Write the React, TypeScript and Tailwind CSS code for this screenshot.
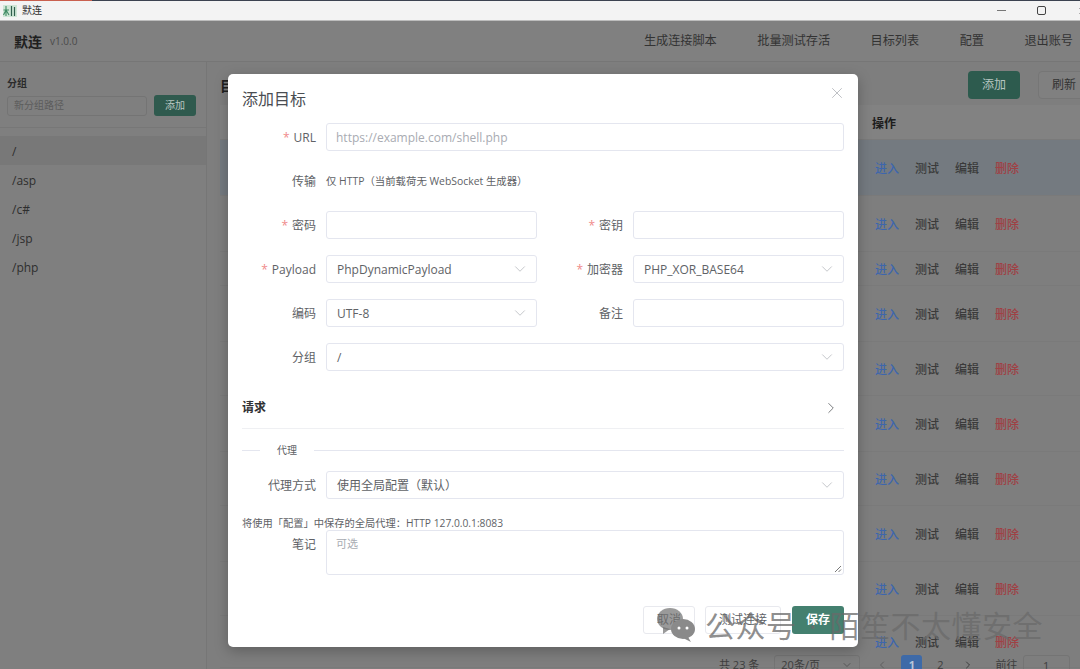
import { ChevronDown, ChevronLeft, ChevronRight, X } from 'lucide-react';
import type { ReactNode } from 'react';

const FONT = "font-['Open_Sans','Noto_Sans_CJK_SC',sans-serif]";

const GROUPS = ['/', '/asp', '/c#', '/jsp', '/php'];
const NAV = ['生成连接脚本', '批量测试存活', '目标列表', '配置', '退出账号'];
const ROW_HEIGHTS = ['h-[56px]', 'h-[56px]', 'h-[34px]', 'h-[56px]', 'h-[54px]', 'h-[56px]', 'h-[54px]', 'h-[56px]', 'h-[54px]', 'h-[52px]'];

function TitleBar() {
  return (
    <div className="shrink-0 h-[21px] bg-[#f3f3f3] border-b border-[#bdbdbd]">
      <div className="flex h-[1px]">
        <div className="w-[92px] bg-[#c9604f]" />
        <div className="flex-1 bg-[#3b4250]" />
      </div>
      <div className="flex items-center h-[19px] pl-[3px]">
        <svg width="14" height="12" viewBox="0 0 14 12">
          <rect width="14" height="12" fill="#cfe6d6" />
          <path d="M0.5 5 H6 M3 1 V11 M3 5 L0.5 10 M3 5 L6 10" stroke="#3f8a63" strokeWidth="1.1" fill="none" />
          <path d="M8.5 1 V11 M11.5 2 V11" stroke="#2f5f4d" strokeWidth="1.2" fill="none" />
        </svg>
        <span className="ml-[5px] text-[10px] text-[#333]">默连</span>
        <div className="flex-1" />
        <div className="w-[9px] h-[1px] bg-[#777]" />
        <div className="ml-[31px] w-[9px] h-[9px] border border-[#444] rounded-[2px]" />
        <X size={10} strokeWidth={1.2} className="ml-[31px] mr-[-7px] text-[#444]" />
      </div>
    </div>
  );
}

function Header() {
  return (
    <div className="shrink-0 h-[41px] flex items-center pl-[14px] pr-[7px] bg-[#808080] border-b border-[#767676]">
      <span className="text-[14px] font-bold text-[#1f1f1f]">默连</span>
      <span className="ml-[8px] text-[10px] text-[#4a4a4a]">v1.0.0</span>
      <div className="flex-1" />
      <nav className="flex gap-[40.5px] text-[12.15px] text-[#333]">
        {NAV.map((n) => (
          <span key={n}>{n}</span>
        ))}
      </nav>
    </div>
  );
}

function Sidebar() {
  return (
    <aside className="shrink-0 w-[207px] bg-[#7f7f7f] border-r border-[#767676]">
      <div className="h-[66px] px-[7px] pt-[14px] border-b border-[#777]">
        <div className="text-[10px] font-bold leading-[14px] text-[#2b2b2b]">分组</div>
        <div className="flex items-center gap-[7px] mt-[5px]">
          <div className="flex items-center w-[140px] h-[20px] px-[6px] border border-[#747474] rounded-[3px] text-[10px] text-[#5c5c5c]">
            新分组路径
          </div>
          <div className="flex items-center justify-center w-[42px] h-[21px] rounded-[3px] bg-[#2f5a4e] text-[10px] text-[#b9c7c2]">
            添加
          </div>
        </div>
      </div>
      <div className="pt-[8px]">
        {GROUPS.map((g, i) => (
          <div
            key={g}
            className={`flex items-center h-[29px] pl-[12px] pt-[2px] text-[12px] text-[#2e2e2e] ${i === 0 ? 'bg-[#787878]' : ''}`}
          >
            {g}
          </div>
        ))}
      </div>
    </aside>
  );
}

function Table() {
  return (
    <div className="flex-1 min-w-0 flex flex-col overflow-hidden pl-[13px] bg-[#7e7e7e]">
      <div className="shrink-0 h-[43px] flex items-center pt-[3px]">
        <span className="text-[14px] font-bold text-[#1f1f1f]">目标列表</span>
        <div className="flex-1" />
        <div className="flex items-center justify-center w-[52px] h-[28px] rounded-[4px] bg-[#2d5b4e] text-[12px] text-[#b6c6c1]">
          添加
        </div>
        <div className="flex items-center justify-center w-[52px] h-[28px] ml-[18px] mr-[-10px] rounded-[4px] border border-[#767676] bg-[#808080] text-[12px] text-[#333]">
          刷新
        </div>
      </div>
      <div className="shrink-0 h-[35px] flex items-center pl-[652px] pt-[3px] bg-[#828282] border-b border-[#7a7a7a]">
        <span className="text-[12px] font-bold text-[#1d1d1d]">操作</span>
      </div>
      {ROW_HEIGHTS.map((h, i) => (
        <div
          key={i}
          className={`shrink-0 ${h} flex items-center pl-[655px] pt-[2px] gap-[16px] text-[12px] font-medium border-b border-[#7a7a7a] ${i === 0 ? 'bg-[#747a80]' : ''}`}
        >
          <span className="text-[#3d66ad]">进入</span>
          <span className="text-[#3a3a3a]">测试</span>
          <span className="text-[#3a3a3a]">编辑</span>
          <span className="text-[#a04044]">删除</span>
        </div>
      ))}
    </div>
  );
}

function Pagination() {
  return (
    <div className="absolute left-[719px] top-[655px] flex items-start text-[11px] text-[#3d3d3d]">
      <span className="leading-[20px]">共 23 条</span>
      <div className="ml-[15px] flex items-center justify-between w-[86px] h-[20px] px-[6px] border border-[#747474] rounded-[3px]">
        <span>20条/页</span>
        <ChevronDown size={12} strokeWidth={1.2} />
      </div>
      <ChevronLeft size={12} className="ml-[16px] mt-[4px] text-[#5f5f5f]" />
      <div className="ml-[13px] flex justify-center w-[21px] h-[20px] leading-[20px] rounded-[3px] bg-[#3e6aa8] text-[#b8c6da] font-bold">
        1
      </div>
      <span className="ml-[15px] leading-[20px]">2</span>
      <ChevronRight size={12} className="ml-[18px] mt-[4px]" />
      <span className="ml-[22px] leading-[20px]">前往</span>
      <div className="ml-[5px] flex justify-center w-[47px] h-[20px] leading-[20px] border border-[#747474] rounded-[3px]">
        1
      </div>
    </div>
  );
}

function Field({ label, required, children, width = 'w-[74px]' }: { label: string; required?: boolean; children: ReactNode; width?: string }) {
  return (
    <div className="flex items-center min-w-0">
      <label className={`shrink-0 ${width} pt-[2px] text-right text-[12px] text-[#606266]`}>
        {required && <span className="mr-[4px] text-[#f08a8a]">*</span>}
        {label}
      </label>
      <div className="flex-1 min-w-0 ml-[10px]">{children}</div>
    </div>
  );
}

function Input({ placeholder }: { placeholder?: string }) {
  return (
    <div className="flex items-center h-[28px] px-[9px] pt-[1px] bg-white border border-[#e4e6ef] rounded-[3px] text-[12px] text-[#a8abb2]">
      {placeholder}
    </div>
  );
}

function Select({ value }: { value: string }) {
  return (
    <div className="flex items-center justify-between h-[28px] pl-[10px] pr-[7px] bg-white border border-[#e4e6ef] rounded-[3px] text-[12px] text-[#606266]">
      <span className="pt-[1px]">{value}</span>
      <ChevronDown size={18} strokeWidth={0.9} className="text-[#a8abb2]" />
    </div>
  );
}

function Button({ children, primary, className }: { children: ReactNode; primary?: boolean; className: string }) {
  return (
    <div
      className={`flex items-center justify-center h-[28px] rounded-[3px] text-[12px] ${className} ${
        primary ? 'bg-[#44806f] text-white font-bold' : 'bg-white border border-[#e8e9ee] text-[#606266]'
      }`}
    >
      {children}
    </div>
  );
}

function Dialog() {
  return (
    <div className="absolute left-[228px] top-[74px] w-[630px] h-[573px] px-[14px] bg-white rounded-[5px] shadow-[0_4px_14px_rgba(0,0,0,0.25)]">
      <div className="relative h-[49px] pt-[14px] text-[16px] leading-[22px] text-[#4a4d52]">
        添加目标
        <X size={18} strokeWidth={0.9} className="absolute right-[-2px] top-[10px] text-[#a0a3a8]" />
      </div>
      <div className="flex flex-col gap-[16px]">
        <Field label="URL" required>
          <Input placeholder="https://example.com/shell.php" />
        </Field>
        <div className="flex items-center h-[28px] pt-[2px]">
          <label className="w-[74px] text-right text-[12px] text-[#606266]">传输</label>
          <span className="ml-[10px] text-[10.4px] text-[#606266]">仅 HTTP（当前载荷无 WebSocket 生成器）</span>
        </div>
        <div className="grid grid-cols-[295px_307px]">
          <Field label="密码" required>
            <Input />
          </Field>
          <Field label="密钥" required width="w-[86px]">
            <Input />
          </Field>
        </div>
        <div className="grid grid-cols-[295px_307px]">
          <Field label="Payload" required>
            <Select value="PhpDynamicPayload" />
          </Field>
          <Field label="加密器" required width="w-[86px]">
            <Select value="PHP_XOR_BASE64" />
          </Field>
        </div>
        <div className="grid grid-cols-[295px_307px]">
          <Field label="编码">
            <Select value="UTF-8" />
          </Field>
          <Field label="备注" width="w-[86px]">
            <Input />
          </Field>
        </div>
        <Field label="分组">
          <Select value="/" />
        </Field>
      </div>

      <div className="flex items-center justify-between h-[58px] pt-[16px] border-b border-[#eff0f3] text-[12px] font-bold text-[#303133]">
        <span>请求</span>
        <ChevronRight size={18} strokeWidth={1.1} className="mr-[4px] text-[#606266]" />
      </div>

      <div className="flex items-center h-[42px] text-[10px] text-[#606266]">
        <div className="w-[18px] h-[1px] bg-[#e4e6ef]" />
        <span className="px-[17px]">代理</span>
        <div className="flex-1 h-[1px] bg-[#e4e6ef]" />
      </div>

      <Field label="代理方式">
        <Select value="使用全局配置（默认）" />
      </Field>
      <div className="mt-[17px] text-[10.25px] leading-[14px] text-[#606266]">将使用「配置」中保存的全局代理：HTTP 127.0.0.1:8083</div>

      <div className="flex items-start">
        <label className="shrink-0 w-[74px] pt-[7px] text-right text-[12px] leading-[16px] text-[#606266]">笔记</label>
        <div className="relative flex-1 h-[45px] ml-[10px] px-[9px] pt-[5px] border border-[#e4e6ef] rounded-[3px] text-[11px] text-[#a8abb2]">
          可选
          <svg width="8" height="8" viewBox="0 0 8 8" className="absolute right-[1px] bottom-[1px]">
            <path d="M1 7 L7 1 M4.5 7 L7 4.5" stroke="#555" strokeWidth="0.8" />
          </svg>
        </div>
      </div>

      <div className="flex justify-end mt-[31px]">
        <Button className="w-[52px]">取消</Button>
        <Button className="w-[76px] ml-[10px]">测试连接</Button>
        <Button primary className="w-[52px] ml-[11px]">保存</Button>
      </div>
    </div>
  );
}

function Watermark() {
  return (
    <div className="absolute left-[655px] top-[604px] flex items-start">
      <svg width="42" height="42" viewBox="0 0 42 42">
        <ellipse cx="15" cy="15" rx="13" ry="11" fill="#6f6f6f" fillOpacity="0.7" />
        <path d="M8 23 L8 30 L15 25 Z" fill="#6f6f6f" fillOpacity="0.7" />
        <ellipse cx="28" cy="25" rx="12" ry="10" fill="#8a8a8a" />
        <path d="M33 33 L36 38 L28 34 Z" fill="#8a8a8a" />
        <circle cx="24" cy="24" r="1.5" fill="#fff" />
        <circle cx="32" cy="24" r="1.5" fill="#fff" />
      </svg>
      <span className="ml-[8px] text-[30px] leading-[44px] tracking-[0.5px] [word-spacing:4px] whitespace-nowrap text-[#6a6a6a]/75">公众号 · 陌笙不太懂安全</span>
    </div>
  );
}

export default function App() {
  return (
    <div className={`relative flex flex-col w-[1080px] h-[669px] overflow-hidden bg-[#7e7e7e] ${FONT}`}>
      <TitleBar />
      <Header />
      <div className="flex-1 min-h-0 flex">
        <Sidebar />
        <Table />
      </div>
      <Pagination />
      <Dialog />
      <Watermark />
    </div>
  );
}
